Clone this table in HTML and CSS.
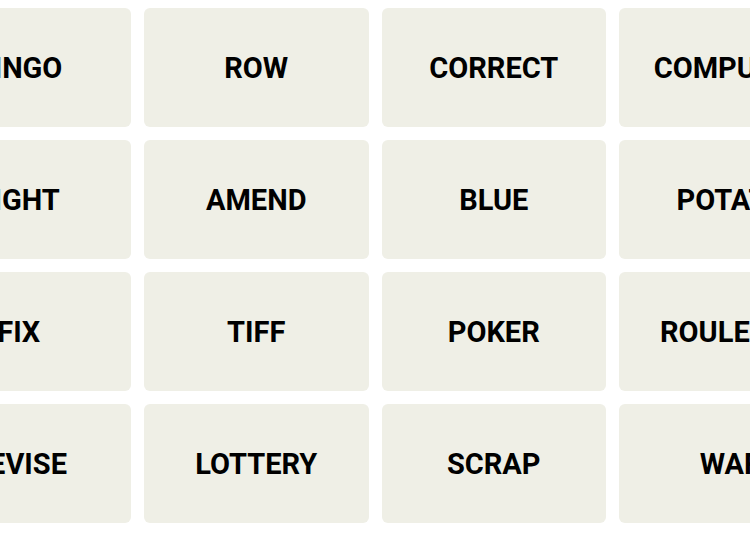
FILE: index.html
```html
<!DOCTYPE html>
<html>
<head>
<meta charset="utf-8">
<link rel="stylesheet" href="styles.css">
</head>
<body>
<div class="board">
  <div class="tile">BINGO</div>
  <div class="tile">ROW</div>
  <div class="tile">CORRECT</div>
  <div class="tile">COMPUTER</div>
  <div class="tile">FIGHT</div>
  <div class="tile">AMEND</div>
  <div class="tile">BLUE</div>
  <div class="tile">POTATO</div>
  <div class="tile">FIX</div>
  <div class="tile">TIFF</div>
  <div class="tile">POKER</div>
  <div class="tile">ROULETTE</div>
  <div class="tile">REVISE</div>
  <div class="tile">LOTTERY</div>
  <div class="tile">SCRAP</div>
  <div class="tile">WAR</div>
</div>
</body>
</html>
```
FILE: styles.css
```css
html, body {
  margin: 0;
  padding: 0;
  background: #ffffff;
  overflow: hidden;
}
.board {
  display: grid;
  grid-template-columns: repeat(4, 224.5px);
  grid-auto-rows: 119px;
  gap: 13px;
  margin: 8px 0 0 -93.5px;
  width: 937px;
}
.tile {
  background: #efefe6;
  border-radius: 6px;
  display: flex;
  align-items: center;
  justify-content: center;
  font-family: Roboto, "Liberation Sans", sans-serif;
  font-weight: 700;
  font-size: 29px;
  color: #000;
  white-space: nowrap;
}
```
